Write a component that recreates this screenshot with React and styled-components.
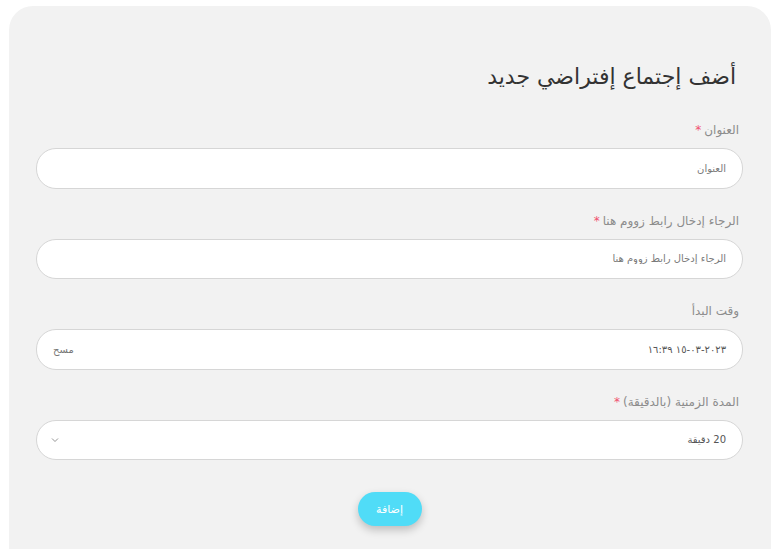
import React from 'react';
import styled, { createGlobalStyle } from 'styled-components';

const GlobalStyle = createGlobalStyle`
  body {
    margin: 0;
    background: #ffffff;
    font-family: "DejaVu Sans", "Noto Sans", sans-serif;
  }
`;

const Page = styled.div`
  padding: 6px 9px 0 9px;
  height: 549px;
  box-sizing: border-box;
  overflow: hidden;
`;

const Card = styled.form`
  width: 762px;
  min-height: 560px;
  box-sizing: border-box;
  background: #f2f2f2;
  border-radius: 24px 24px 0 0;
  padding: 56px 28px 0 27px;
  direction: rtl;
  display: flex;
  flex-direction: column;
`;

const Title = styled.h2`
  margin: 0 7px 28px 0;
  font-size: 22px;
  line-height: 30px;
  font-weight: normal;
  color: #333;
`;

const Field = styled.div`
  display: flex;
  flex-direction: column;
  gap: 8px;
  margin-bottom: 22px;
`;

const Label = styled.label`
  font-size: 12px;
  line-height: 20px;
  color: #8c8c8c;
  padding-right: 4px;
`;

const Star = styled.span`
  color: #f0506e;
  margin-right: 3px;
`;

const Box = styled.div`
  height: 40.5px;
  box-sizing: border-box;
  background: #fff;
  border: 1px solid #d6d6d6;
  border-radius: 20px;
  display: flex;
  align-items: center;
  justify-content: space-between;
  padding: 0 16px;
`;

const Input = styled.input`
  flex: 1;
  border: none;
  outline: none;
  background: transparent;
  direction: rtl;
  font-family: inherit;
  font-size: 10px;
  color: #555;
  padding: 0;
  &::placeholder {
    color: #7a7a7a;
  }
`;

const Value = styled.span`
  font-size: 10px;
  color: #555;
`;

const Clear = styled.span`
  font-size: 10px;
  color: #777;
`;

const Chevron = styled.svg`
  width: 8px;
  height: 8px;
  margin-left: -2px;
`;

const Actions = styled.div`
  display: flex;
  justify-content: center;
  margin-top: 10px;
`;

const Button = styled.button`
  width: 64px;
  height: 34px;
  border: none;
  border-radius: 17px;
  background: #50dcf7;
  color: #fff;
  font-family: inherit;
  font-size: 11px;
  box-shadow: 0 4px 8px rgba(0, 0, 0, 0.22);
  cursor: pointer;
`;

export default function App() {
  return (
    <Page>
      <GlobalStyle />
      <Card onSubmit={(e) => e.preventDefault()}>
        <Title>أضف إجتماع إفتراضي جديد</Title>

        <Field>
          <Label htmlFor="title">
            العنوان<Star>*</Star>
          </Label>
          <Box>
            <Input id="title" placeholder="العنوان" />
          </Box>
        </Field>

        <Field>
          <Label htmlFor="link">
            الرجاء إدخال رابط زووم هنا<Star>*</Star>
          </Label>
          <Box>
            <Input id="link" placeholder="الرجاء إدخال رابط زووم هنا" />
          </Box>
        </Field>

        <Field>
          <Label>وقت البدأ</Label>
          <Box>
            <Value>٢٠٢٣-٠٣-١٥ ١٦:٣٩</Value>
            <Clear>مسح</Clear>
          </Box>
        </Field>

        <Field>
          <Label>
            المدة الزمنية (بالدقيقة)<Star>*</Star>
          </Label>
          <Box>
            <Value>20 دقيقة</Value>
            <Chevron viewBox="0 0 8 8">
              <path d="M1 2.5 L4 5.5 L7 2.5" fill="none" stroke="#888" strokeWidth="0.9" />
            </Chevron>
          </Box>
        </Field>

        <Actions>
          <Button type="submit">إضافة</Button>
        </Actions>
      </Card>
    </Page>
  );
}
